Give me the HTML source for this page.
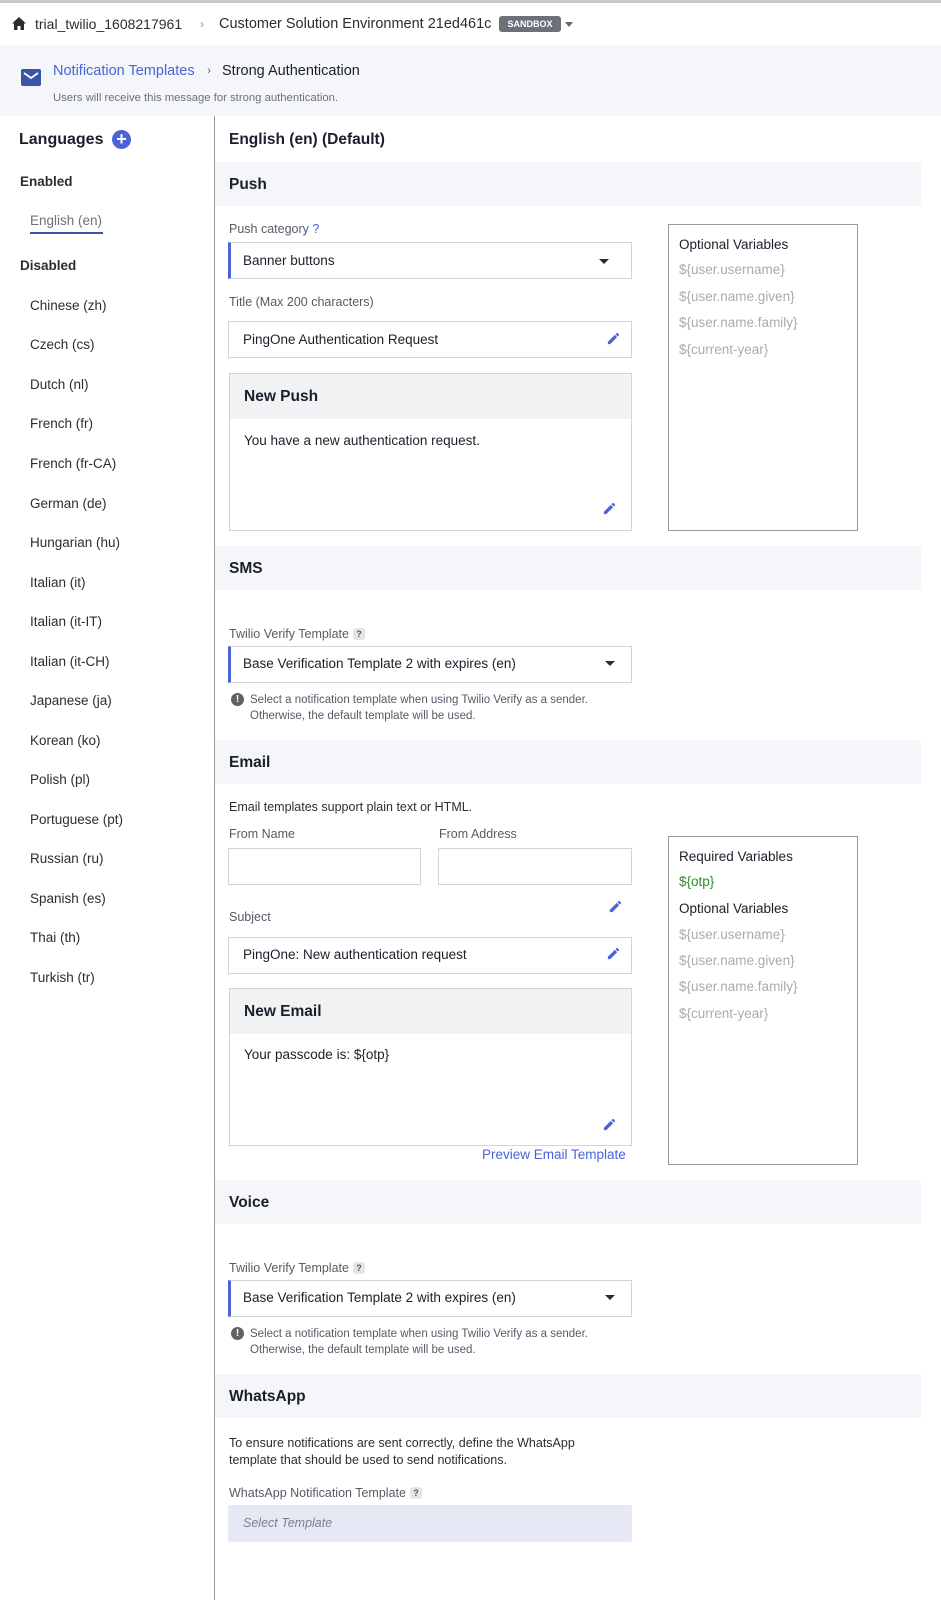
<!DOCTYPE html>
<html><head><meta charset="utf-8"><style>
*{box-sizing:border-box;margin:0;padding:0}
body{width:941px;height:1600px;position:relative;background:#fff;font-family:"Liberation Sans",Arial,sans-serif;color:#1b1f2a;overflow:hidden}
.a{position:absolute;white-space:nowrap}
.bar{position:absolute;left:215px;width:706px;height:44px;background:#f5f6fa}
.bar span{position:absolute;left:14px;top:14px;font-size:15.5px;font-weight:bold}
.lbl{font-size:12.5px;color:#555b66}
.box{position:absolute;border:1px solid #d2d4d8;background:#fff}
.sel{border-left:3px solid #4a63d9}
.txt{font-size:13.5px;color:#1b1f2a}
.caret{position:absolute;width:0;height:0;border-left:5px solid transparent;border-right:5px solid transparent;border-top:5px solid #2a2d33}
.lang{position:absolute;left:30px;font-size:13.5px;color:#2a2d33}
.q{display:inline-block;width:12px;height:12px;border-radius:3px;background:#e4e5e8;font-size:9px;text-align:center;line-height:12px;color:#555;font-weight:bold;vertical-align:1px;margin-left:4px}
.vars{font-size:13.5px;color:#a8abb0}
.info{position:absolute;width:13px;height:13px;border-radius:50%;background:#5f6368;color:#fff;font-size:10px;font-weight:bold;text-align:center;line-height:13px}
.sm{font-size:11.5px;color:#555b66;line-height:16px}
</style></head><body>
<div class="a" style="left:0;top:0;width:941px;height:3px;background:#c8c8c8"></div>
<svg class="a" style="left:12px;top:17px" width="14" height="13" viewBox="0 0 14 13"><path d="M7 0L0 6.5h2V13h3.5V9h3v4H12V6.5h2z" fill="#2a2d33"/></svg>
<div class="a" style="left:35px;top:16px;font-size:14px;color:#2a2d33">trial_twilio_1608217961</div>
<div class="a" style="left:200px;top:17px;font-size:12px;color:#999">›</div>
<div class="a" style="left:219px;top:16px;font-size:14.5px;color:#2a2d33">Customer Solution Environment 21ed461c</div>
<div class="a" style="left:499px;top:16px;width:62px;height:16px;background:#6b7079;border-radius:3px;color:#fff;font-size:9px;font-weight:bold;text-align:center;line-height:16px">SANDBOX</div>
<div class="caret" style="left:565px;top:22px;border-top-color:#666;border-width:5px 4px 0 4px"></div>

<div class="a" style="left:0;top:45px;width:941px;height:71px;background:#f5f6fa"></div>
<div class="a" style="left:21px;top:69px;width:20px;height:17px;background:#3a55a8;border-radius:2px"></div>
<svg class="a" style="left:21px;top:69px" width="20" height="17"><path d="M3 4l7 5 7-5" stroke="#fff" stroke-width="1.8" fill="none"/></svg>
<div class="a" style="left:53px;top:63px;font-size:14.5px;color:#4a63d9">Notification Templates</div>
<div class="a" style="left:207px;top:63px;font-size:12px;color:#666">›</div>
<div class="a" style="left:222px;top:63px;font-size:14.5px;color:#1b1f2a">Strong Authentication</div>
<div class="a" style="left:53px;top:92px;font-size:11.3px;color:#6b7079">Users will receive this message for strong authentication.</div>

<div class="a" style="left:214px;top:116px;width:1px;height:1484px;background:#9a9a9a"></div>

<div class="a" style="left:19px;top:131px;font-size:16px;font-weight:bold">Languages</div>
<div class="a" style="left:112px;top:130px;width:19px;height:19px;border-radius:50%;background:#4a63d9;color:#fff;font-size:18px;line-height:18px;text-align:center;font-weight:bold">+</div>
<div class="a" style="left:20px;top:174px;font-size:13.5px;font-weight:bold;color:#2a2d33">Enabled</div>
<div class="lang" style="top:213px;color:#6b7079">English (en)</div>
<div class="a" style="left:30px;top:232px;width:73px;height:2px;background:#3a55a8"></div>
<div class="a" style="left:20px;top:258px;font-size:13.5px;font-weight:bold;color:#2a2d33">Disabled</div>
<div class="lang" style="top:298px">Chinese (zh)</div>
<div class="lang" style="top:337px">Czech (cs)</div>
<div class="lang" style="top:377px">Dutch (nl)</div>
<div class="lang" style="top:416px">French (fr)</div>
<div class="lang" style="top:456px">French (fr-CA)</div>
<div class="lang" style="top:496px">German (de)</div>
<div class="lang" style="top:535px">Hungarian (hu)</div>
<div class="lang" style="top:575px">Italian (it)</div>
<div class="lang" style="top:614px">Italian (it-IT)</div>
<div class="lang" style="top:654px">Italian (it-CH)</div>
<div class="lang" style="top:693px">Japanese (ja)</div>
<div class="lang" style="top:733px">Korean (ko)</div>
<div class="lang" style="top:772px">Polish (pl)</div>
<div class="lang" style="top:812px">Portuguese (pt)</div>
<div class="lang" style="top:851px">Russian (ru)</div>
<div class="lang" style="top:891px">Spanish (es)</div>
<div class="lang" style="top:930px">Thai (th)</div>
<div class="lang" style="top:970px">Turkish (tr)</div>

<div class="a" style="left:229px;top:131px;font-size:15.5px;font-weight:bold">English (en) (Default)</div>

<!-- PUSH -->
<div class="bar" style="top:162px"><span>Push</span></div>
<div class="a lbl" style="left:229px;top:222px">Push category <span style="color:#4a63d9">?</span></div>
<div class="box sel" style="left:228px;top:242px;width:404px;height:37px"></div>
<div class="a txt" style="left:243px;top:253px">Banner buttons</div>
<div class="caret" style="left:599px;top:259px"></div>
<div class="a lbl" style="left:229px;top:295px">Title (Max 200 characters)</div>
<div class="box" style="left:228px;top:321px;width:404px;height:37px"></div>
<div class="a txt" style="left:243px;top:332px">PingOne Authentication Request</div>
<svg class="a" style="left:606px;top:331px" width="15" height="15" viewBox="0 0 24 24"><path d="M3 17.25V21h3.75L17.8 9.94l-3.75-3.75L3 17.25zM20.7 7.04a1 1 0 000-1.41l-2.34-2.34a1 1 0 00-1.41 0l-1.83 1.83 3.75 3.75 1.83-1.83z" fill="#4a63d9"/></svg>
<div class="box" style="left:229px;top:373px;width:403px;height:158px"></div>
<div class="a" style="left:230px;top:374px;width:401px;height:45px;background:#f1f2f4"></div>
<div class="a" style="left:244px;top:388px;font-size:15.5px;font-weight:bold">New Push</div>
<div class="a txt" style="left:244px;top:433px">You have a new authentication request.</div>
<svg class="a" style="left:602px;top:501px" width="15" height="15" viewBox="0 0 24 24"><path d="M3 17.25V21h3.75L17.8 9.94l-3.75-3.75L3 17.25zM20.7 7.04a1 1 0 000-1.41l-2.34-2.34a1 1 0 00-1.41 0l-1.83 1.83 3.75 3.75 1.83-1.83z" fill="#4a63d9"/></svg>
<div class="box" style="left:668px;top:224px;width:190px;height:307px;border-color:#9a9a9a"></div>
<div class="a txt" style="left:679px;top:237px">Optional Variables</div>
<div class="a vars" style="left:679px;top:262px">${user.username}</div>
<div class="a vars" style="left:679px;top:289px">${user.name.given}</div>
<div class="a vars" style="left:679px;top:315px">${user.name.family}</div>
<div class="a vars" style="left:679px;top:342px">${current-year}</div>

<!-- SMS -->
<div class="bar" style="top:546px"><span>SMS</span></div>
<div class="a lbl" style="left:229px;top:627px">Twilio Verify Template<span class="q">?</span></div>
<div class="box sel" style="left:228px;top:646px;width:404px;height:37px"></div>
<div class="a txt" style="left:243px;top:656px">Base Verification Template 2 with expires (en)</div>
<div class="caret" style="left:605px;top:661px"></div>
<div class="info" style="left:231px;top:693px">!</div>
<div class="a sm" style="left:250px;top:692px">Select a notification template when using Twilio Verify as a sender.<br>Otherwise, the default template will be used.</div>

<!-- EMAIL -->
<div class="bar" style="top:740px"><span>Email</span></div>
<div class="a" style="left:229px;top:800px;font-size:12.5px;color:#2a2d33">Email templates support plain text or HTML.</div>
<div class="a lbl" style="left:229px;top:827px">From Name</div>
<div class="a lbl" style="left:439px;top:827px">From Address</div>
<div class="box" style="left:228px;top:848px;width:193px;height:37px"></div>
<div class="box" style="left:438px;top:848px;width:194px;height:37px"></div>
<div class="a lbl" style="left:229px;top:910px">Subject</div>
<svg class="a" style="left:608px;top:899px" width="15" height="15" viewBox="0 0 24 24"><path d="M3 17.25V21h3.75L17.8 9.94l-3.75-3.75L3 17.25zM20.7 7.04a1 1 0 000-1.41l-2.34-2.34a1 1 0 00-1.41 0l-1.83 1.83 3.75 3.75 1.83-1.83z" fill="#4a63d9"/></svg>
<div class="box" style="left:228px;top:937px;width:404px;height:37px"></div>
<div class="a txt" style="left:243px;top:947px">PingOne: New authentication request</div>
<svg class="a" style="left:606px;top:946px" width="15" height="15" viewBox="0 0 24 24"><path d="M3 17.25V21h3.75L17.8 9.94l-3.75-3.75L3 17.25zM20.7 7.04a1 1 0 000-1.41l-2.34-2.34a1 1 0 00-1.41 0l-1.83 1.83 3.75 3.75 1.83-1.83z" fill="#4a63d9"/></svg>
<div class="box" style="left:229px;top:988px;width:403px;height:158px"></div>
<div class="a" style="left:230px;top:989px;width:401px;height:45px;background:#f1f2f4"></div>
<div class="a" style="left:244px;top:1003px;font-size:15.5px;font-weight:bold">New Email</div>
<div class="a txt" style="left:244px;top:1047px">Your passcode is: ${otp}</div>
<svg class="a" style="left:602px;top:1117px" width="15" height="15" viewBox="0 0 24 24"><path d="M3 17.25V21h3.75L17.8 9.94l-3.75-3.75L3 17.25zM20.7 7.04a1 1 0 000-1.41l-2.34-2.34a1 1 0 00-1.41 0l-1.83 1.83 3.75 3.75 1.83-1.83z" fill="#4a63d9"/></svg>
<div class="a" style="left:482px;top:1147px;font-size:13.5px;color:#4a63d9">Preview Email Template</div>
<div class="box" style="left:668px;top:836px;width:190px;height:329px;border-color:#9a9a9a"></div>
<div class="a txt" style="left:679px;top:849px">Required Variables</div>
<div class="a" style="left:679px;top:874px;font-size:13.5px;color:#2e8b2e">${otp}</div>
<div class="a txt" style="left:679px;top:901px">Optional Variables</div>
<div class="a vars" style="left:679px;top:927px">${user.username}</div>
<div class="a vars" style="left:679px;top:953px">${user.name.given}</div>
<div class="a vars" style="left:679px;top:979px">${user.name.family}</div>
<div class="a vars" style="left:679px;top:1006px">${current-year}</div>

<!-- VOICE -->
<div class="bar" style="top:1180px"><span>Voice</span></div>
<div class="a lbl" style="left:229px;top:1261px">Twilio Verify Template<span class="q">?</span></div>
<div class="box sel" style="left:228px;top:1280px;width:404px;height:37px"></div>
<div class="a txt" style="left:243px;top:1290px">Base Verification Template 2 with expires (en)</div>
<div class="caret" style="left:605px;top:1295px"></div>
<div class="info" style="left:231px;top:1327px">!</div>
<div class="a sm" style="left:250px;top:1326px">Select a notification template when using Twilio Verify as a sender.<br>Otherwise, the default template will be used.</div>

<!-- WHATSAPP -->
<div class="bar" style="top:1374px"><span>WhatsApp</span></div>
<div class="a" style="left:229px;top:1435px;font-size:12.5px;color:#2a2d33;line-height:17px">To ensure notifications are sent correctly, define the WhatsApp<br>template that should be used to send notifications.</div>
<div class="a lbl" style="left:229px;top:1486px">WhatsApp Notification Template<span class="q">?</span></div>
<div class="a" style="left:228px;top:1505px;width:404px;height:37px;background:#e6e8f6;border-radius:2px"></div>
<div class="a" style="left:243px;top:1516px;font-size:12.5px;font-style:italic;color:#7a7f8a">Select Template</div>
</body></html>
